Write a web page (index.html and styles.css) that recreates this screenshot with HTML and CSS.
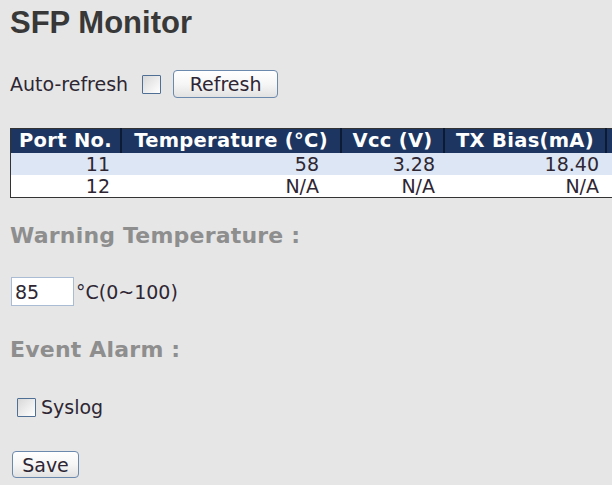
FILE: index.html
```html
<!DOCTYPE html>
<html>
<head>
<meta charset="utf-8">
<link rel="stylesheet" href="styles.css">
</head>
<body>
<div class="page">
  <h1 class="title">SFP Monitor</h1>
  <div class="refresh-row">
    <span class="label">Auto-refresh</span>
    <input type="checkbox" class="cb cb-auto">
    <button class="btn btn-refresh">Refresh</button>
  </div>
  <div class="table-wrap">
    <table class="sfp">
      <thead>
        <tr>
          <th class="c1">Port No.</th>
          <th class="c2">Temperature (°C)</th>
          <th class="c3">Vcc (V)</th>
          <th class="c4">TX Bias(mA)</th>
          <th class="c5"></th>
        </tr>
      </thead>
      <tbody>
        <tr class="odd">
          <td class="c1">11</td>
          <td class="c2">58</td>
          <td class="c3">3.28</td>
          <td class="c4">18.40</td>
          <td class="c5"></td>
        </tr>
        <tr class="even">
          <td class="c1">12</td>
          <td class="c2">N/A</td>
          <td class="c3">N/A</td>
          <td class="c4">N/A</td>
          <td class="c5"></td>
        </tr>
      </tbody>
    </table>
  </div>
  <h2 class="section warn">Warning Temperature :</h2>
  <div class="temp-row">
    <input type="text" class="tinput" value="85">
    <span class="unit">°C(0~100)</span>
  </div>
  <h2 class="section alarm">Event Alarm :</h2>
  <div class="syslog-row">
    <input type="checkbox" class="cb cb-sys">
    <span class="label">Syslog</span>
  </div>
  <div class="save-row">
    <button class="btn btn-save">Save</button>
  </div>
</div>
</body>
</html>
```

FILE: styles.css
```css
html, body {
  margin: 0;
  padding: 0;
  background: #e6e6e6;
  overflow: hidden;
}
.page {
  padding-left: 10px;
  font-family: "DejaVu Sans", Verdana, sans-serif;
  font-size: 19px;
  color: #2e2633;
}
.title {
  margin: 5px 0 0 0;
  font-family: "Liberation Sans", Arial, sans-serif;
  font-weight: bold;
  font-size: 31px;
  line-height: 36px;
  color: #383838;
}
.refresh-row {
  display: flex;
  align-items: center;
  margin-top: 29px;
  height: 28px;
}
.label {
  line-height: 22px;
}
.cb {
  appearance: none;
  -webkit-appearance: none;
  margin: 0;
  box-sizing: border-box;
  width: 19px;
  height: 19px;
  border: 1.5px solid #4f6f94;
  border-radius: 1px;
  background: linear-gradient(135deg, #d8d8d8 0%, #f4f4f4 70%, #ffffff 100%);
}
.cb-auto {
  margin-left: 14px;
}
.btn {
  box-sizing: border-box;
  font-family: "DejaVu Sans", Verdana, sans-serif;
  font-size: 19px;
  color: #2e2633;
  border: 1.5px solid #6b88ad;
  border-radius: 4px;
  background: linear-gradient(to bottom, #ffffff 0%, #f6f6f6 50%, #e2e2e2 100%);
  padding: 0;
  margin: 0;
}
.btn-refresh {
  margin-left: 12px;
  width: 105px;
  height: 28px;
}
.table-wrap {
  margin-top: 30px;
  width: 700px;
}
.sfp {
  border-collapse: collapse;
  border: 1.5px solid #333333;
  table-layout: fixed;
  width: 700px;
}
.sfp th {
  background: #1d3661;
  color: #ffffff;
  font-weight: bold;
  font-size: 19.5px;
  letter-spacing: 0.3px;
  height: 24px;
  padding: 0;
  text-align: center;
  white-space: nowrap;
  border-left: 2px solid #0c1a33;
  line-height: 22px;
}
.sfp th.c1 { border-left: none; }
.sfp td {
  padding: 0;
  text-align: right;
  height: 22px;
  line-height: 20px;
  color: #2e2633;
}
.sfp .c1 { width: 109px; }
.sfp .c2 { width: 218px; }
.sfp .c3 { width: 101px; }
.sfp .c4 { width: 160px; }
.sfp td.c1 { padding-right: 11px; }
.sfp td.c2 { padding-right: 22px; }
.sfp td.c3 { padding-right: 9px; }
.sfp td.c4 { padding-right: 7px; }
.sfp tr.odd td { background: #dce6f4; }
.sfp tr.even td { background: #ffffff; }
.section {
  margin: 0;
  font-size: 22px;
  font-weight: bold;
  color: #8e8e8e;
  line-height: 26px;
  letter-spacing: 0.2px;
}
.warn { margin-top: 25px; }
.temp-row {
  display: flex;
  align-items: center;
  margin-top: 28px;
}
.tinput {
  box-sizing: border-box;
  width: 63px;
  height: 29px;
  margin: 0 0 0 1px;
  border: 1.5px solid #a9bcd3;
  background: #ffffff;
  font-family: "DejaVu Sans", Verdana, sans-serif;
  font-size: 19px;
  color: #2e2633;
  padding: 0 0 0 3px;
  outline: none;
}
.unit { margin-left: 2px; }
.alarm { margin-top: 31px; }
.syslog-row {
  display: flex;
  align-items: center;
  margin-top: 33px;
  padding-left: 7px;
}
.cb-sys { margin-right: 5px; }
.save-row {
  margin-top: 33px;
  padding-left: 2px;
}
.btn-save {
  width: 67px;
  height: 27px;
}
```
